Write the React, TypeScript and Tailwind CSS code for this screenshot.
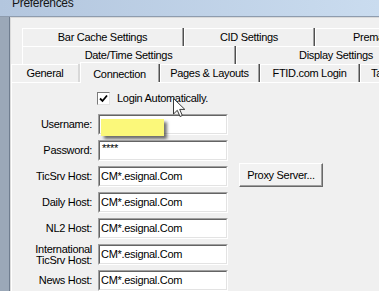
const FONT = "font-['Liberation_Sans',Arial,sans-serif]";

function Sep() {
  return (
    <div className="flex h-full w-[2px] shrink-0">
      <div className="w-px bg-[#a0a0a0]" />
      <div className="w-px bg-[#505050]" />
    </div>
  );
}

function Tab({ w, label, pl }: { w?: string; label: string; pl?: string }) {
  return (
    <div
      className={`flex h-full items-center border-l border-t border-white ${
        w ? w + " shrink-0 justify-center" : "flex-1 " + pl
      } whitespace-nowrap`}
    >
      {label}
    </div>
  );
}

function Field({ value, children }: { value?: string; children?: React.ReactNode }) {
  return (
    <div className="relative h-[21px] w-[130px] border-l border-t border-b border-r border-l-[#a0a0a0] border-t-[#a0a0a0] border-b-white border-r-white">
      <div className="flex h-full items-center border-l border-t border-b border-r border-l-[#646464] border-t-[#646464] border-b-[#e3e3e3] border-r-[#e3e3e3] bg-white pl-px">
        {value}
      </div>
      {children}
    </div>
  );
}

function Label({ children }: { children: React.ReactNode }) {
  return <div className="flex items-center justify-end whitespace-nowrap text-right">{children}</div>;
}

export default function App() {
  return (
    <div className={`flex h-[291px] w-[379px] flex-col overflow-hidden bg-[#f0f0f0] text-[11px] tracking-[-0.3px] text-black ${FONT}`}>
      <div className="h-[17px] shrink-0 border-b border-[#8e9cae] bg-gradient-to-r from-[#b3c6de] to-[#cadcef] pl-[12px]">
        <div className="-mt-[3px] text-[12px] leading-[12px] tracking-[-0.3px] text-[#151515]">Preferences</div>
      </div>
      <div className="flex flex-1">
        <div className="w-[10px] shrink-0 border-r border-[#6f7d8f] bg-[#9ba8b8]" />
        <div className="relative flex flex-1 flex-col border-l border-t border-[#dadada]">
          <div className="h-[10px] shrink-0" />
          <div className="ml-[11px] flex h-[18px] shrink-0">
            <Tab w="w-[160px]" label="Bar Cache Settings" />
            <Sep />
            <Tab w="w-[129px]" label="CID Settings" />
            <Sep />
            <Tab label="Premat" pl="pl-[37px]" />
          </div>
          <div className="ml-[11px] flex h-[18px] shrink-0">
            <Tab w="w-[212px]" label="Date/Time Settings" />
            <Sep />
            <Tab label="Display Settings" pl="pl-[62px]" />
          </div>
          <div className="flex h-[18px] shrink-0 items-end">
            <Tab w="w-[67px]" label="General" />
            <div className="h-full w-[2px] shrink-0 bg-[#d8d8d8]" />
            <div className="relative z-10 -mb-px flex h-[21px] w-[78px] shrink-0 items-start justify-center border-l border-t border-white bg-[#f0f0f0] pt-[3px]">
              Connection
            </div>
            <Sep />
            <Tab w="w-[98px]" label="Pages & Layouts" />
            <Sep />
            <Tab w="w-[98px]" label="FTID.com Login" />
            <Sep />
            <Tab label="Ta" pl="pl-[10px]" />
          </div>
          <div className="flex-1 border-l border-t border-white pt-[9px]">
            <div className="flex items-center pl-[85px]">
              <div className="flex h-[13px] w-[13px] items-center justify-center border border-l-[#7a7a7a] border-t-[#7a7a7a] border-b-[#e3e3e3] border-r-[#e3e3e3] bg-white">
                <svg width="9" height="9" viewBox="0 0 9 9">
                  <path d="M1 4.5 L3.5 7 L8 1.5" fill="none" stroke="#000" strokeWidth="1.8" />
                </svg>
              </div>
              <span className="ml-[7px] leading-[13px]">Login Automatically.</span>
            </div>
            <div className="mt-[9px] grid grid-cols-[80px_130px_84px] grid-rows-[repeat(7,21px)] gap-x-[6px] gap-y-[5px]">
              <Label>Username:</Label>
              <Field>
                <div className="absolute left-[2px] top-[4px] h-[17px] w-[63px] bg-[#fbf87a] shadow-[3px_3px_3px_rgba(0,0,0,0.55)]" />
              </Field>
              <div />
              <Label>Password:</Label>
              <Field>
                <span className="absolute left-[3px] top-[1px] text-[11px] leading-[12px]">****</span>
              </Field>
              <div />
              <Label>TicSrv Host:</Label>
              <Field value="CM*.esignal.Com" />
              <button className="ml-[5px] flex h-[24px] w-[84px] items-center justify-center self-end border border-l-white border-t-white border-b-[#696969] border-r-[#696969] bg-[#f2f2f2] tracking-[-0.3px] shadow-[inset_-1px_-1px_0_#a0a0a0]">
                Proxy Server...
              </button>
              <Label>Daily Host:</Label>
              <Field value="CM*.esignal.Com" />
              <div />
              <Label>NL2 Host:</Label>
              <Field value="CM*.esignal.Com" />
              <div />
              <div className="flex flex-col items-end justify-center whitespace-nowrap text-right leading-[11px]">
                <span>International</span>
                <span>TicSrv Host:</span>
              </div>
              <Field value="CM*.esignal.Com" />
              <div />
              <Label>News Host:</Label>
              <Field value="CM*.esignal.Com" />
              <div />
            </div>
          </div>
          <svg className="absolute left-[162px] top-[80px]" width="13" height="20" viewBox="0 0 13 20">
            <path d="M0.5 0.5 L0.5 16 L4.3 12.3 L7 18.5 L9.3 17.5 L6.7 11.4 L11.8 11.4 Z" fill="#fff" stroke="#3a3a3a" strokeWidth="1" />
          </svg>
        </div>
      </div>
    </div>
  );
}
